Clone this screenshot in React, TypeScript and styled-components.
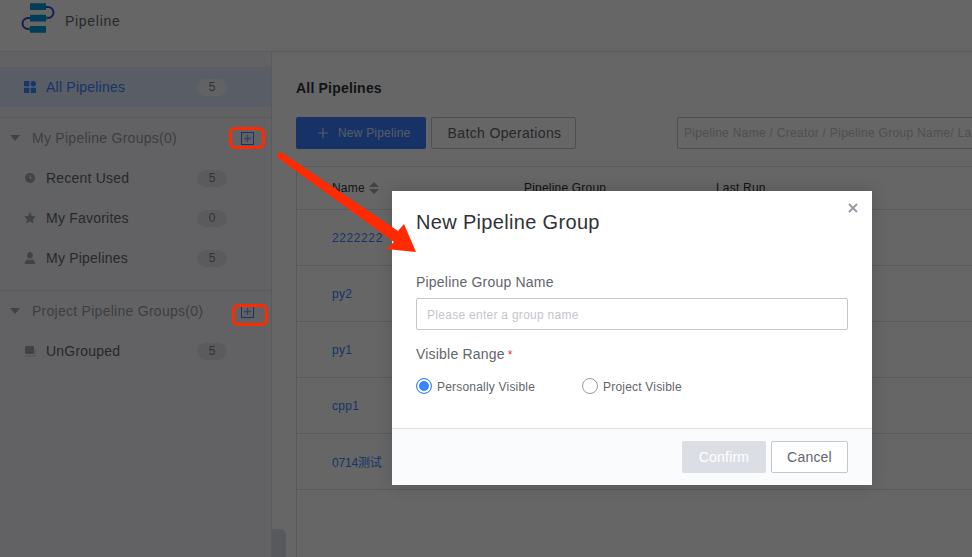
import React from "react";
import styled, { createGlobalStyle } from "styled-components";

const Global = createGlobalStyle`
  html, body { margin: 0; padding: 0; width: 972px; height: 557px; overflow: hidden; background: #fff; }
  * { box-sizing: border-box; }
  body { font-family: "Liberation Sans", "Noto Sans CJK SC", sans-serif; }
`;

const Page = styled.div`
  position: relative;
  width: 972px;
  height: 557px;
  overflow: hidden;
  display: flex;
  flex-direction: column;
  background: #fff;
`;
const TopBar = styled.header`
  height: 52px;
  flex: none;
  display: flex;
  align-items: center;
  padding: 0 0 15px 21px;
  gap: 10px;
  background: #fff;
  border-bottom: 1px solid #dde0e6;
`;
const BrandName = styled.span`
  font-size: 14px;
  letter-spacing: 0.7px;
  margin-top: 5px;
  color: #63656e;
`;
const Body = styled.div`
  flex: 1;
  display: flex;
  min-height: 0;
`;
const Sidebar = styled.aside`
  width: 272px;
  flex: none;
  padding-top: 15px;
  background: #f6f6f9;
  border-right: 1px solid #dde0e6;
`;
const NavItem = styled.div<{ $active?: boolean }>`
  height: 40px;
  display: flex;
  align-items: center;
  padding: 0 44px 0 24px;
  gap: 10px;
  font-size: 14px;
  letter-spacing: 0.22px;
  color: ${(p) => (p.$active ? "#3a84ff" : "#63656e")};
  background: ${(p) => (p.$active ? "#dfe8ff" : "transparent")};
`;
const NavLabel = styled.span`
  flex: 1;
`;
const NavIcon = styled.svg`
  width: 12px;
  height: 12px;
  flex: none;
`;
const Count = styled.span<{ $active?: boolean }>`
  width: 30px;
  height: 17px;
  border-radius: 9px;
  font-size: 12px;
  line-height: 17px;
  text-align: center;
  color: #7b7d8a;
  letter-spacing: 0;
  background: ${(p) => (p.$active ? "#f3f6fb" : "#e4e4ea")};
`;
const Section = styled.section<{ $gap: number }>`
  margin-top: ${(p) => p.$gap}px;
  border-top: 1px solid #dde0e6;
`;
const GroupHead = styled.div`
  height: 40px;
  display: flex;
  align-items: center;
  padding: 0 18px 0 10px;
  font-size: 14px;
  letter-spacing: 0.27px;
  color: #979ba5;
`;
const Caret = styled.i`
  width: 0;
  height: 0;
  flex: none;
  margin-right: 12px;
  border-left: 5px solid transparent;
  border-right: 5px solid transparent;
  border-top: 6px solid #a3a5ae;
`;
const GroupTitle = styled.span`
  flex: 1;
`;
const AddBox = styled.span`
  width: 13px;
  height: 13px;
  flex: none;
  margin-right: -1px;
  border: 1px solid #3a7dff;
  display: flex;
  align-items: center;
  justify-content: center;
`;
const Main = styled.main`
  position: relative;
  flex: 1;
  min-width: 0;
  padding: 26px 0 0 24px;
  display: flex;
  flex-direction: column;
  background: #fff;
`;
const Heading = styled.h1`
  margin: 0;
  height: 20px;
  font-size: 14px;
  line-height: 20px;
  letter-spacing: 0.2px;
  font-weight: 700;
  color: #313238;
`;
const Toolbar = styled.div`
  display: flex;
  margin-top: 19px;
  width: 800px;
`;
const PrimaryButton = styled.button`
  width: 130px;
  height: 32px;
  display: flex;
  align-items: center;
  gap: 10px;
  padding: 0 0 0 22px;
  border: 0;
  border-radius: 2px;
  background: #3a7dff;
  color: #d6e2ff;
  font: 12px "Liberation Sans", sans-serif;
  letter-spacing: 0.2px;
`;
const PlainButton = styled.button`
  width: 145px;
  height: 32px;
  margin-left: 5px;
  padding: 0 0 0 2px;
  background: #fff;
  border: 1px solid #c4c6cc;
  border-radius: 2px;
  color: #63656e;
  font: 14px "Liberation Sans", sans-serif;
  letter-spacing: 0.35px;
`;
const Search = styled.div`
  width: 320px;
  height: 32px;
  margin-left: 101px;
  flex: none;
  display: flex;
  align-items: center;
  padding-left: 6px;
  white-space: nowrap;
  border: 1px solid #c4c6cc;
  border-radius: 2px;
  font-size: 12px;
  letter-spacing: 0.3px;
  color: #c4c6cc;
`;
const Table = styled.div`
  margin-top: 17px;
  flex: 1;
  width: 720px;
  border-left: 1px solid #dde0e6;
  border-top: 1px solid #dde0e6;
`;
const HeadRow = styled.div`
  height: 43px;
  display: grid;
  grid-template-columns: 192px 192px 1fr;
  align-items: center;
  padding-left: 35px;
  border-bottom: 1px solid #dde0e6;
  font-size: 12px;
  letter-spacing: 0.2px;
  color: #313238;
  span { display: flex; align-items: center; gap: 4px; }
`;
const DataRow = styled.div<{ $spacing: number }>`
  height: 56px;
  display: flex;
  align-items: center;
  padding-left: 35px;
  border-bottom: 1px solid #dde0e6;
  font-size: 12px;
  letter-spacing: ${(p) => p.$spacing}px;
  color: #3a84ff;
`;
const ScrollThumb = styled.div`
  position: absolute;
  left: 0;
  bottom: 0;
  width: 14px;
  height: 28px;
  background: #dcdee5;
  border-radius: 0 6px 0 0;
`;
const Overlay = styled.div`
  position: absolute;
  inset: 0;
  padding: 191px 0 0 392px;
  background: rgba(0, 0, 0, 0.6);
`;
const Modal = styled.div`
  position: relative;
  width: 480px;
  height: 294px;
  background: #fff;
  display: flex;
  flex-direction: column;
  box-shadow: 0 0 16px rgba(0, 0, 0, 0.16);
`;
const Close = styled.svg`
  position: absolute;
  top: 12px;
  right: 14px;
  width: 10px;
  height: 10px;
`;
const ModalBody = styled.div`
  flex: 1;
  padding: 18px 24px 0;
`;
const ModalTitle = styled.h2`
  margin: 0 0 37px;
  font-size: 20px;
  line-height: 26px;
  font-weight: 400;
  letter-spacing: 0.33px;
  color: #313238;
`;
const Label = styled.div`
  font-size: 14px;
  line-height: 20px;
  letter-spacing: 0.2px;
  color: #63656e;
  em { font-style: normal; color: #ea3636; margin-left: 3px; font-size: 12px; }
`;
const NameInput = styled.div`
  height: 32px;
  margin: 6px 0 14px;
  padding: 1px 0 0 10px;
  display: flex;
  align-items: center;
  border: 1px solid #c4c6cc;
  border-radius: 2px;
  font-size: 12px;
  letter-spacing: 0.28px;
  color: #c4c6cc;
`;
const RadioRow = styled.div`
  display: flex;
  margin-top: 13px;
`;
const RadioOption = styled.label<{ $w: number }>`
  width: ${(p) => p.$w}px;
  display: flex;
  align-items: center;
  gap: 5px;
  font-size: 12px;
  letter-spacing: 0.2px;
  color: #63656e;
  span { padding-top: 1px; }
`;
const RadioDot = styled.i<{ $on?: boolean }>`
  width: 16px;
  height: 16px;
  flex: none;
  border-radius: 50%;
  background: ${(p) => (p.$on ? "#3a84ff" : "#fff")};
  border: 1px solid ${(p) => (p.$on ? "#3a84ff" : "#979ba5")};
  box-shadow: ${(p) => (p.$on ? "inset 0 0 0 2px #fff" : "none")};
`;
const Footer = styled.footer`
  height: 57px;
  flex: none;
  display: flex;
  justify-content: flex-end;
  gap: 5px;
  padding: 12px 24px;
  background: #fafbfd;
  border-top: 1px solid #dcdee5;
`;
const ConfirmBtn = styled.button`
  width: 84px;
  height: 32px;
  padding: 0;
  border: 0;
  border-radius: 2px;
  background: #dcdee5;
  color: #fff;
  font: 14px "Liberation Sans", sans-serif;
  letter-spacing: 0.2px;
`;
const CancelBtn = styled.button`
  width: 77px;
  height: 32px;
  padding: 0;
  background: #fff;
  border: 1px solid #c4c6cc;
  border-radius: 2px;
  color: #63656e;
  font: 14px "Liberation Sans", sans-serif;
  letter-spacing: 0.2px;
`;
const Mark = styled.div<{ $x: number; $y: number }>`
  position: absolute;
  left: ${(p) => p.$x}px;
  top: ${(p) => p.$y}px;
  width: 36px;
  height: 22px;
  border: 3px solid #ff2a00;
  border-radius: 6px;
`;
const Arrow = styled.svg`
  position: absolute;
  left: 0;
  top: 0;
  pointer-events: none;
`;

const Logo = () => (
  <svg width="34" height="36" viewBox="0 0 34 36">
    <path d="M25 7 h2 a5.5 5.5 0 0 1 0 11 h-2" fill="none" stroke="#2f4fd0" strokeWidth="2" />
    <path d="M9 18 h-2 a5.5 5.5 0 0 0 0 11 h2" fill="none" stroke="#2f4fd0" strokeWidth="2" />
    <rect x="9" y="3.3" width="16" height="6.7" rx="0.5" fill="#0098d8" />
    <rect x="9" y="14.7" width="16" height="6.7" rx="0.5" fill="#0098d8" />
    <rect x="9" y="26" width="16" height="6.7" rx="0.5" fill="#0098d8" />
    <rect x="25" y="16.5" width="2" height="3" fill="#24c08c" />
    <rect x="7.5" y="27.5" width="2" height="3" fill="#24c08c" />
  </svg>
);

const PlusGlyph = () => (
  <svg width="7" height="7" viewBox="0 0 7 7">
    <path d="M3.5 0 V7 M0 3.5 H7" stroke="#7fa4ff" strokeWidth="1.4" />
  </svg>
);
const GridIcon = () => (
  <NavIcon viewBox="0 0 12 12" fill="#3a84ff">
    <rect width="5.3" height="5.3" rx="0.6" />
    <circle cx="9.3" cy="2.7" r="2.7" />
    <rect y="6.7" width="5.3" height="5.3" rx="0.6" />
    <rect x="6.7" y="6.7" width="5.3" height="5.3" rx="0.6" />
  </NavIcon>
);
const ClockIcon = () => (
  <NavIcon viewBox="0 0 12 12">
    <circle cx="6" cy="6" r="5" fill="#a3a5ae" />
    <path d="M6 3.2 V6.2 H8.6" fill="none" stroke="#f6f6f9" strokeWidth="1" />
  </NavIcon>
);
const StarIcon = () => (
  <NavIcon viewBox="0 0 12 12" fill="#a3a5ae">
    <path d="M6 0 L7.8 3.9 L12 4.5 L8.9 7.4 L9.7 11.6 L6 9.5 L2.3 11.6 L3.1 7.4 L0 4.5 L4.2 3.9 Z" />
  </NavIcon>
);
const UserIcon = () => (
  <NavIcon viewBox="0 0 12 12" fill="#a3a5ae">
    <path d="M6 0 C7.8 0 8.9 1.4 8.9 3.2 C8.9 4.9 8 6.6 6 6.6 C4 6.6 3.1 4.9 3.1 3.2 C3.1 1.4 4.2 0 6 0 Z" />
    <path d="M0.6 12 C0.6 9 2.4 7.9 4.3 7.2 L6 8.4 L7.7 7.2 C9.6 7.9 11.4 9 11.4 12 Z" />
  </NavIcon>
);
const FolderIcon = () => (
  <NavIcon viewBox="0 0 12 12" fill="#a3a5ae">
    <rect x="1" y="1" width="9" height="8" rx="1" />
    <path d="M1 11 H11 M11 3 V11" stroke="#a3a5ae" strokeWidth="0.8" strokeDasharray="1.4 1" fill="none" />
  </NavIcon>
);

const nav = [
  { label: "Recent Used", count: 5, Icon: ClockIcon },
  { label: "My Favorites", count: 0, Icon: StarIcon },
  { label: "My Pipelines", count: 5, Icon: UserIcon },
];
const rows = [
  { name: "2222222", spacing: 0.6 },
  { name: "py2", spacing: 0.3 },
  { name: "py1", spacing: 0.3 },
  { name: "cpp1", spacing: 0.3 },
  { name: "0714测试", spacing: -0.2 },
];

export default function App() {
  return (
    <Page>
      <Global />
      <TopBar>
        <Logo />
        <BrandName>Pipeline</BrandName>
      </TopBar>
      <Body>
        <Sidebar>
          <NavItem $active>
            <GridIcon />
            <NavLabel>All Pipelines</NavLabel>
            <Count $active>5</Count>
          </NavItem>
          <Section $gap={10}>
            <GroupHead>
              <Caret />
              <GroupTitle>My Pipeline Groups(0)</GroupTitle>
              <AddBox><PlusGlyph /></AddBox>
            </GroupHead>
            {nav.map(({ label, count, Icon }) => (
              <NavItem key={label}>
                <Icon />
                <NavLabel>{label}</NavLabel>
                <Count>{count}</Count>
              </NavItem>
            ))}
          </Section>
          <Section $gap={12}>
            <GroupHead>
              <Caret />
              <GroupTitle>Project Pipeline Groups(0)</GroupTitle>
              <AddBox><PlusGlyph /></AddBox>
            </GroupHead>
            <NavItem>
              <FolderIcon />
              <NavLabel>UnGrouped</NavLabel>
              <Count>5</Count>
            </NavItem>
          </Section>
        </Sidebar>
        <Main>
          <Heading>All Pipelines</Heading>
          <Toolbar>
            <PrimaryButton>
              <svg width="10" height="10" viewBox="0 0 10 10">
                <path d="M5 0 V10 M0 5 H10" stroke="#d6e2ff" strokeWidth="1.2" />
              </svg>
              New Pipeline
            </PrimaryButton>
            <PlainButton>Batch Operations</PlainButton>
            <Search>Pipeline Name / Creator / Pipeline Group Name/ Last Run</Search>
          </Toolbar>
          <Table>
            <HeadRow>
              <span>
                Name
                <svg width="10" height="12" viewBox="0 0 10 12" fill="#a3a5ae">
                  <path d="M5 0 L10 5 H0 Z M0 7 H10 L5 12 Z" />
                </svg>
              </span>
              <span>Pipeline Group</span>
              <span>Last Run</span>
            </HeadRow>
            {rows.map((r) => (
              <DataRow key={r.name} $spacing={r.spacing}>{r.name}</DataRow>
            ))}
          </Table>
          <ScrollThumb />
        </Main>
      </Body>
      <Overlay>
        <Modal>
          <Close viewBox="0 0 10 10">
            <path d="M1 1 L9 9 M9 1 L1 9" stroke="#979ba5" strokeWidth="2" />
          </Close>
          <ModalBody>
            <ModalTitle>New Pipeline Group</ModalTitle>
            <Label>Pipeline Group Name</Label>
            <NameInput>Please enter a group name</NameInput>
            <Label>
              Visible Range<em>*</em>
            </Label>
            <RadioRow>
              <RadioOption $w={166}>
                <RadioDot $on />
                <span>Personally Visible</span>
              </RadioOption>
              <RadioOption $w={120}>
                <RadioDot />
                <span>Project Visible</span>
              </RadioOption>
            </RadioRow>
          </ModalBody>
          <Footer>
            <ConfirmBtn>Confirm</ConfirmBtn>
            <CancelBtn>Cancel</CancelBtn>
          </Footer>
        </Modal>
      </Overlay>
      <Mark $x={229} $y={127} />
      <Mark $x={232} $y={304} />
      <Arrow width="972" height="557" viewBox="0 0 972 557">
        <circle cx="280.3" cy="155.5" r="3" fill="#ff2a00" />
        <polygon points="282.5,153 398,231 404,224 416,252 386,249 394,242 278,158" fill="#ff2a00" />
      </Arrow>
    </Page>
  );
}
